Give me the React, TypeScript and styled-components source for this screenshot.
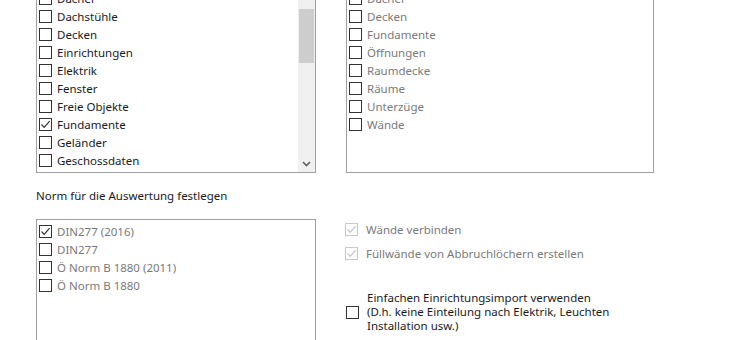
import React from 'react';
import styled, { createGlobalStyle } from 'styled-components';

const GlobalStyle = createGlobalStyle`
  html, body {
    margin: 0;
    padding: 0;
    background: #ffffff;
    overflow: hidden;
  }
  body {
    font-family: 'Noto Sans', 'Open Sans', sans-serif;
    font-size: 11.5px;
    color: #1e1e1e;
  }
`;

const Page = styled.div`
  width: 730px;
  height: 340px;
  overflow: hidden;
`;

const Content = styled.div`
  display: flex;
  flex-direction: column;
  padding-left: 36px;
  margin-top: -13px;
`;

const TopRow = styled.div`
  display: flex;
  gap: 30px;
`;

const ListBox = styled.div<{ $width: number; $height: number }>`
  box-sizing: border-box;
  width: ${({ $width }) => $width}px;
  height: ${({ $height }) => $height}px;
  border: 1px solid #a0a0a0;
  background: #ffffff;
  display: flex;
`;

const Items = styled.div<{ $top?: number }>`
  flex: 1;
  display: flex;
  flex-direction: column;
  padding: ${({ $top = 1 }) => $top}px 0 0 2px;
`;

const Item = styled.div<{ $disabled?: boolean }>`
  height: 18px;
  display: flex;
  align-items: center;
  gap: 5px;
  white-space: nowrap;
  color: ${({ $disabled }) => ($disabled ? '#7a7a7a' : '#1a1a1a')};
`;

const Box = styled.span<{ $faded?: boolean }>`
  box-sizing: border-box;
  width: 13px;
  height: 13px;
  flex-shrink: 0;
  border: 1px solid ${({ $faded }) => ($faded ? '#c8c8c8' : '#333333')};
  background: #ffffff;
  display: flex;
  align-items: center;
  justify-content: center;
`;

const ScrollBar = styled.div`
  width: 17px;
  display: flex;
  flex-direction: column;
  background: #f0f0f0;
`;

const Arrow = styled.div`
  height: 17px;
  display: flex;
  align-items: center;
  justify-content: center;
  color: #606060;
`;

const Thumb = styled.div`
  height: 54px;
  margin: 4px 1px 0;
  background: #cdcdcd;
`;

const Track = styled.div`
  flex: 1;
`;

const SectionLabel = styled.div`
  margin-top: 14px;
  height: 18px;
  line-height: 18px;
  color: #1a1a1a;
`;

const BottomRow = styled.div`
  display: flex;
  gap: 29px;
  margin-top: 14px;
`;

const Options = styled.div`
  display: flex;
  flex-direction: column;
  padding-top: 3px;
`;

const Option = styled.div<{ $disabled?: boolean }>`
  display: flex;
  align-items: center;
  gap: 8px;
  height: 14px;
  margin-bottom: 10px;
  color: ${({ $disabled }) => ($disabled ? '#7a7a7a' : '#1a1a1a')};
`;

const MultiOption = styled.div`
  display: flex;
  align-items: center;
  gap: 8px;
  margin-top: 21px;
  padding-left: 1px;
  color: #1a1a1a;
`;

const OptionText = styled.div`
  line-height: 14px;
`;

const Check: React.FC<{ checked?: boolean; faded?: boolean }> = ({ checked, faded }) => (
  <Box $faded={faded}>
    {checked && (
      <svg width="11" height="11" viewBox="0 0 11 11">
        <path
          d="M1.5 5.5 L4.2 8.3 L9.6 2.2"
          fill="none"
          stroke={faded ? '#c4c4c4' : '#333333'}
          strokeWidth="1.2"
        />
      </svg>
    )}
  </Box>
);

const Chevron: React.FC<{ up?: boolean }> = ({ up }) => (
  <svg width="9" height="6" viewBox="0 0 9 6">
    <path
      d={up ? 'M1 5 L4.5 1.5 L8 5' : 'M1 1 L4.5 4.5 L8 1'}
      fill="none"
      stroke="#606060"
      strokeWidth="1.6"
    />
  </svg>
);

const elements = [
  'Dächer',
  'Dachstühle',
  'Decken',
  'Einrichtungen',
  'Elektrik',
  'Fenster',
  'Freie Objekte',
  'Fundamente',
  'Geländer',
  'Geschossdaten',
];

const layers = ['Dächer', 'Decken', 'Fundamente', 'Öffnungen', 'Raumdecke', 'Räume', 'Unterzüge', 'Wände'];

const norms = ['DIN277 (2016)', 'DIN277', 'Ö Norm B 1880 (2011)', 'Ö Norm B 1880'];

export default function App() {
  return (
    <Page>
      <GlobalStyle />
      <Content>
        <TopRow>
          <ListBox $width={280} $height={186}>
            <Items>
              {elements.map((name) => (
                <Item key={name}>
                  <Check checked={name === 'Fundamente'} />
                  {name}
                </Item>
              ))}
            </Items>
            <ScrollBar>
              <Arrow>
                <Chevron up />
              </Arrow>
              <Thumb />
              <Track />
              <Arrow>
                <Chevron />
              </Arrow>
            </ScrollBar>
          </ListBox>
          <ListBox $width={308} $height={186}>
            <Items>
              {layers.map((name) => (
                <Item key={name} $disabled>
                  <Check />
                  {name}
                </Item>
              ))}
            </Items>
          </ListBox>
        </TopRow>
        <SectionLabel>Norm für die Auswertung festlegen</SectionLabel>
        <BottomRow>
          <ListBox $width={280} $height={140}>
            <Items $top={2}>
              {norms.map((name, i) => (
                <Item key={name} $disabled>
                  <Check checked={i === 0} />
                  {name}
                </Item>
              ))}
            </Items>
          </ListBox>
          <Options>
            <Option $disabled>
              <Check checked faded />
              Wände verbinden
            </Option>
            <Option $disabled>
              <Check checked faded />
              Füllwände von Abbruchlöchern erstellen
            </Option>
            <MultiOption>
              <Check />
              <OptionText>
                Einfachen Einrichtungsimport verwenden
                <br />
                (D.h. keine Einteilung nach Elektrik, Leuchten
                <br />
                Installation usw.)
              </OptionText>
            </MultiOption>
          </Options>
        </BottomRow>
      </Content>
    </Page>
  );
}
